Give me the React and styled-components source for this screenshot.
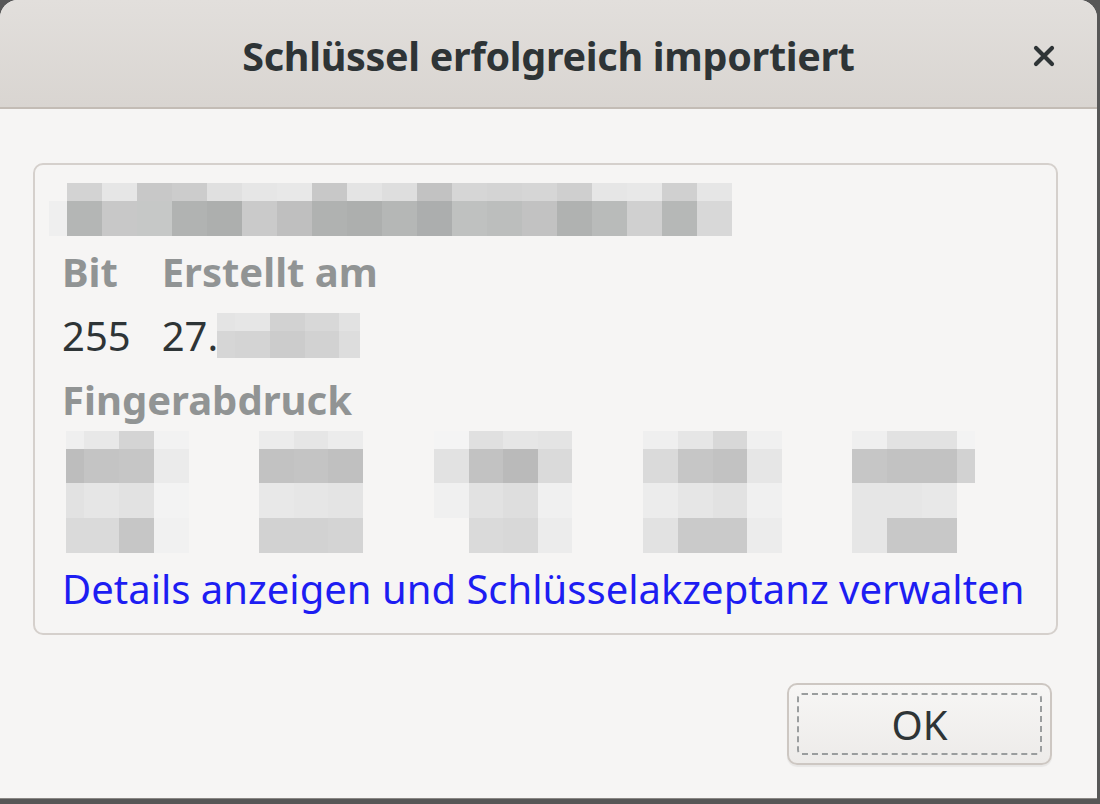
import React from 'react';
import styled, { createGlobalStyle } from 'styled-components';

const GlobalStyle = createGlobalStyle`
  html, body {
    margin: 0;
    padding: 0;
    background: #575757;
  }
  body {
    width: 1100px;
    height: 804px;
    overflow: hidden;
    font-family: "Noto Sans", "Open Sans", sans-serif;
  }
`;

const Window = styled.div`
  width: 1097px;
  height: 798px;
  background: #f6f5f4;
  border-radius: 18px 18px 0 0;
  display: flex;
  flex-direction: column;
  overflow: hidden;
  box-shadow: 0 1px 0 #8a8784;
`;

const TitleBar = styled.div`
  height: 107px;
  flex: none;
  display: flex;
  align-items: center;
  justify-content: center;
  position: relative;
  background: linear-gradient(#e2dfdc, #d9d5d1);
  border-bottom: 2px solid #c3bcb5;
`;

const Title = styled.h1`
  margin: 0;
  font-size: 39.5px;
  font-weight: 700;
  color: #2e3436;
  letter-spacing: -0.3px;
  line-height: 50px;
  transform: translateY(2px);
`;

const CloseButton = styled.button`
  position: absolute;
  right: 36px;
  top: 39px;
  width: 34px;
  height: 34px;
  padding: 0;
  border: none;
  background: transparent;
  display: flex;
  align-items: center;
  justify-content: center;
`;

const Content = styled.div`
  flex: 1;
  display: flex;
  flex-direction: column;
  padding: 54px 39px 33px 33px;
`;

const Frame = styled.div`
  border: 2px solid #d5d0cc;
  border-radius: 10px;
  padding: 18px 24px 22px 14px;
  display: flex;
  flex-direction: column;
`;

const Inner = styled.div`
  padding-left: 13px;
  display: flex;
  flex-direction: column;
`;

const InfoGrid = styled.div`
  display: grid;
  grid-template-columns: auto auto;
  justify-content: start;
  column-gap: 31px;
  margin-top: 3px;
`;

const Label = styled.div`
  font-size: 40px;
  font-weight: 700;
  color: #919494;
  height: 64px;
  display: flex;
  align-items: center;
`;

const Value = styled.div`
  font-size: 40px;
  color: #2e3436;
  height: 64px;
  display: flex;
  align-items: center;
`;

const FingerRow = styled.div`
  display: flex;
  height: 122px;
  padding-left: 4px;
`;

const LinkText = styled.a`
  margin-top: 14px;
  font-size: 40px;
  color: #1d1df2;
  text-decoration: none;
  line-height: 44px;
  cursor: pointer;
`;

const Mosaic = styled.div`
  display: grid;
  grid-template-columns: ${(p) => p.$cols};
  grid-template-rows: ${(p) => p.$rows};
  margin-left: ${(p) => p.$offset || 0}px;
  flex: none;
`;

const Cell = styled.div`
  background: ${(p) => p.$c};
`;

const Footer = styled.div`
  margin-top: auto;
  display: flex;
  justify-content: flex-end;
  padding-right: 6px;
`;

const OkButton = styled.button`
  width: 265px;
  height: 82px;
  border: 2px solid #cdc7c2;
  border-radius: 10px;
  background: linear-gradient(#f7f6f5, #edebe9);
  box-shadow: 0 2px 1px rgba(0, 0, 0, 0.06);
  padding: 8px;
  display: flex;
`;

const FocusRing = styled.span`
  flex: 1;
  border: 2px dashed #9a9d9e;
  border-radius: 5px;
  display: flex;
  align-items: center;
  justify-content: center;
  font-family: "Noto Sans", "Open Sans", sans-serif;
  font-size: 40px;
  color: #2e3436;
`;

const BG = '#f6f5f4';

const keyMosaic = {
  cols: '18px repeat(19, 35px)',
  rows: '18px 35px',
  cells: [
    [BG, '#d3d3d3', '#e6e6e6', '#c8c8c8', '#cccccc', '#e0e0e0', '#e6e6e6', '#e8e8e8', '#c8c8c8', '#e4e4e4', '#dedede', '#c2c2c2', '#d6d6d6', '#d4d4d4', '#d6d6d6', '#cfcfcf', '#e6e6e6', '#e8e8e8', '#d0d0d0', '#e6e6e6'],
    ['#efefef', '#b4b6b5', '#c8c8c8', '#c6c8c7', '#b1b3b2', '#adafae', '#cacaca', '#bfbfbf', '#b0b2b1', '#adafae', '#b5b7b6', '#acaeae', '#bfc1c0', '#bcbebd', '#c2c2c2', '#b0b2b1', '#b9bbba', '#d0d0d0', '#b6b8b7', '#d8d8d8'],
  ],
};

const dateMosaic = {
  cols: '18px 35px 35px 34px 21px',
  rows: '18px 27px',
  cells: [
    ['#e4e4e4', '#e6e6e6', '#d2d2d2', '#d8d8d8', '#e2e2e2'],
    ['#d6d6d6', '#d4d4d4', '#cccccc', '#d2d2d2', '#dddddd'],
  ],
};

const fpRows = '18px 34px 35px 35px';

const fingerprint = [
  {
    offset: 0,
    cols: '18px 35px 35px 35px',
    cells: [
      ['#efefef', '#e8e8e8', '#d4d4d4', '#f2f2f2'],
      ['#bdbdbd', '#c4c4c4', '#c6c6c6', '#ebebeb'],
      ['#e2e2e2', '#e6e6e6', '#e2e2e2', '#f3f3f3'],
      ['#dadada', '#dadada', '#c6c6c6', '#f1f1f1'],
    ],
  },
  {
    offset: 70,
    cols: '35px 34px 35px',
    cells: [
      ['#ececec', '#e6e6e6', '#ececec'],
      ['#c2c2c2', '#c4c4c4', '#c0c0c0'],
      ['#e8e8e8', '#e6e6e6', '#e4e4e4'],
      ['#d2d2d2', '#d2d2d2', '#d4d4d4'],
    ],
  },
  {
    offset: 71,
    cols: '35px 34px 35px 34px',
    cells: [
      ['#f4f4f4', '#e0e0e0', '#e6e6e6', '#e4e4e4'],
      ['#e2e2e2', '#c2c2c2', '#bababa', '#dadada'],
      ['#f0f0f0', '#e2e2e2', '#dedede', '#f0f0f0'],
      [BG, '#dadada', '#d8d8d8', '#ececec'],
    ],
  },
  {
    offset: 71,
    cols: '35px 35px 34px 35px',
    cells: [
      ['#efefef', '#e6e6e6', '#d8d8d8', '#f0f0f0'],
      ['#dadada', '#c6c6c6', '#c2c2c2', '#e6e6e6'],
      ['#ececec', '#e6e6e6', '#e2e2e2', '#f0f0f0'],
      ['#e2e2e2', '#cacaca', '#cacaca', '#ececec'],
    ],
  },
  {
    offset: 70,
    cols: '35px 35px 35px 18px',
    cells: [
      ['#efefef', '#e2e2e2', '#e2e2e2', '#f3f3f3'],
      ['#c6c6c6', '#c2c2c2', '#c2c2c2', '#d2d2d2'],
      ['#e6e6e6', '#e6e6e6', '#e8e8e8', BG],
      ['#e6e6e6', '#c8c8c8', '#c8c8c8', BG],
    ],
  },
];

function Pixelated({ data, rows, offset }) {
  return (
    <Mosaic $cols={data.cols} $rows={rows || data.rows} $offset={offset}>
      {data.cells.flat().map((c, i) => (
        <Cell key={i} $c={c} />
      ))}
    </Mosaic>
  );
}

const CloseIcon = () => (
  <svg width="26" height="26" viewBox="0 0 26 26">
    <path d="M5 5 L21 21 M21 5 L5 21" stroke="#2e3436" strokeWidth="4.2" strokeLinecap="round" />
  </svg>
);

export default function App() {
  return (
    <>
      <GlobalStyle />
      <Window>
        <TitleBar>
          <Title>Schlüssel erfolgreich importiert</Title>
          <CloseButton aria-label="Schließen">
            <CloseIcon />
          </CloseButton>
        </TitleBar>
        <Content>
          <Frame>
            <Pixelated data={keyMosaic} />
            <Inner>
              <InfoGrid>
                <Label>Bit</Label>
                <Label>Erstellt am</Label>
                <Value>255</Value>
                <Value>
                  27.
                  <Pixelated data={dateMosaic} offset={-1} />
                </Value>
              </InfoGrid>
              <Label>Fingerabdruck</Label>
              <FingerRow>
                {fingerprint.map((g, i) => (
                  <Pixelated key={i} data={g} rows={fpRows} offset={g.offset} />
                ))}
              </FingerRow>
              <LinkText>Details anzeigen und Schlüsselakzeptanz verwalten</LinkText>
            </Inner>
          </Frame>
          <Footer>
            <OkButton>
              <FocusRing>OK</FocusRing>
            </OkButton>
          </Footer>
        </Content>
      </Window>
    </>
  );
}
